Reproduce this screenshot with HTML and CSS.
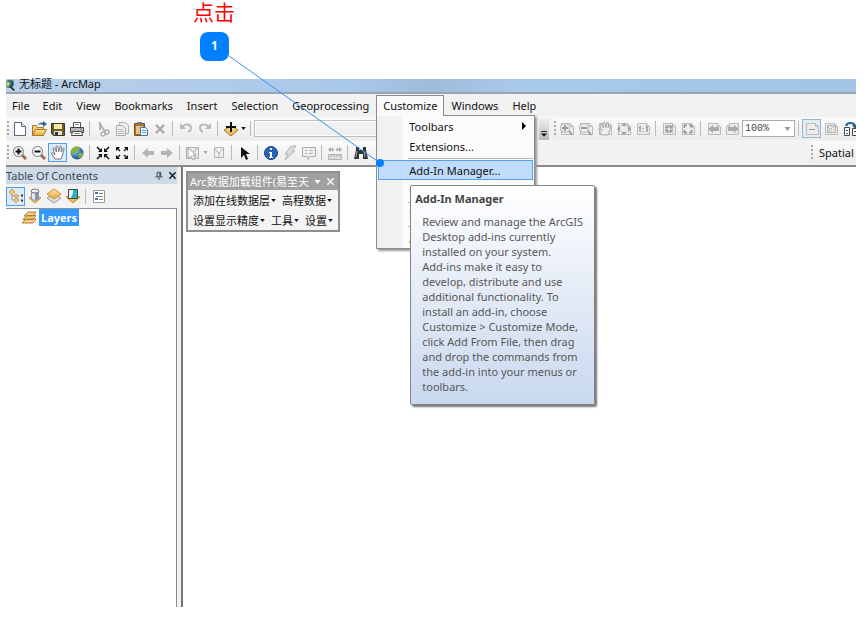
FILE: index.html
```html
<!DOCTYPE html>
<html lang="zh-CN">
<head>
<meta charset="utf-8">
<title>无标题 - ArcMap</title>
<link rel="stylesheet" href="styles.css">
</head>
<body>
<svg class="sprite" aria-hidden="true">
  <defs>
    <linearGradient id="gold" x1="0" y1="0" x2="0" y2="1"><stop offset="0" stop-color="#ffe9a8"/><stop offset="1" stop-color="#e9a63a"/></linearGradient>
    <radialGradient id="sea" cx=".35" cy=".3" r=".8"><stop offset="0" stop-color="#8cc6f5"/><stop offset="1" stop-color="#123f86"/></radialGradient>
  </defs>
  <symbol id="new" viewBox="0 0 16 16"><path d="M2.500 1.500h7l4 4v9h-11z" fill="#fff" stroke="#59687c"/><path d="M9.500 1.500v4h4" fill="#dfe8f3" stroke="#59687c"/></symbol>
  <symbol id="open" viewBox="0 0 16 16"><path d="M1.500 14.500v-10h4l1 2h6v8z" fill="#f5cf6e" stroke="#a8792b"/><path d="M1.500 14.500l3-6h11l-3 6z" fill="url(#gold)" stroke="#a8792b"/><path d="M7 4c1-2 3-3 5-2V0l4 3-4 3V4c-2-1-3-1-5 0z" fill="#2a639e"/></symbol>
  <symbol id="save" viewBox="0 0 16 16"><path d="M1.500 2.500h13v12h-11l-2-2z" fill="#6d5c20" stroke="#3d3620"/><path d="M4 3h8v5H4z" fill="#f4e7a7"/><path d="M4 10h8v4H4z" fill="#ddd"/><path d="M5 11h3v3H5z" fill="#333"/></symbol>
  <symbol id="print" viewBox="0 0 16 16"><path d="M4.500 6V1.500h7V6" fill="#fff" stroke="#555"/><path d="M1.500 6.500h13v5h-13z" fill="#b5b8b9" stroke="#3f4345"/><path d="M3.500 10.500h9l1 4h-11z" fill="#fff" stroke="#444"/><path d="M5 12.500h6M6 3.500h4" stroke="#888"/><path d="M11 8h2" stroke="#3d9b35"/></symbol>
  <symbol id="cut" viewBox="0 0 16 16"><path d="M4 1l6 10M5 1l0 8" fill="none" stroke="#b4b4b4" stroke-width="2"/><circle cx="12" cy="11" r="2" fill="none" stroke="#b0b0b0" stroke-width="1.500"/><circle cx="8" cy="13" r="2" fill="none" stroke="#b4b4b4" stroke-width="1.500"/></symbol>
  <symbol id="copy" viewBox="0 0 16 16"><path d="M5.500 1.500h6l3 3v8h-9z" fill="#eee" stroke="#b0b0b0"/><path d="M2.500 4.500h6l3 3v7h-9z" fill="#eee" stroke="#aaa"/><path d="M4 8.500h5M4 10.500h6M4 12.500h6" stroke="#bbb"/></symbol>
  <symbol id="paste" viewBox="0 0 16 16"><path d="M1.500 2.500h10v12h-10z" fill="#a97428" stroke="#71501f"/><path d="M4 1h5v3H4z" fill="#777"/><path d="M3 5h7v8H3z" fill="#e8c37a"/><path d="M7.500 6.500h5l2 2v6h-7z" fill="#eaf2fc" stroke="#4b73a5"/><path d="M9 9.500h4M9 11.500h4" stroke="#73a0d4"/></symbol>
  <symbol id="del" viewBox="0 0 16 16"><path d="M4 4l8 8M12 4l-8 8" stroke="#a4a4a4" stroke-width="2"/></symbol>
  <symbol id="undo" viewBox="0 0 16 16"><path d="M4 6c4-4 9-3 9 1 0 2-1 3-3 4" fill="none" stroke="#bababa" stroke-width="2"/><path d="M2 2v6h6z" fill="#bababa"/></symbol>
  <symbol id="adddata" viewBox="0 0 16 16"><path d="M1 9l7-4 7 4-7 6z" fill="url(#gold)" stroke="#a8792b"/><path d="M8 1v10M3 6h10" stroke="#111" stroke-width="2"/></symbol>
  <symbol id="zin" viewBox="0 0 16 16"><path d="M10 10l4 4" stroke="#a36a50" stroke-width="3"/><circle cx="6.500" cy="6.500" r="5" fill="#f7fafc" stroke="#777"/><path d="M3.500 6.500h6M6.500 3.500v6" stroke="#111" stroke-width="2"/></symbol>
  <symbol id="zout" viewBox="0 0 16 16"><path d="M10 10l4 4" stroke="#a36a50" stroke-width="3"/><circle cx="6.500" cy="6.500" r="5" fill="#f7fafc" stroke="#777"/><path d="M3.500 6.500h6" stroke="#111" stroke-width="2"/></symbol>
  <symbol id="hand" viewBox="0 0 16 16"><path d="M5 14L1.500 8.500c0-1 1-1 2 0L5 10 3 4c0-1.500 1-1.500 2 0l1.500 3L6 2c0-1.500 1.500-1.500 2 0l.5 5L10 2c0-1.500 1.500-1 1.500 0l-.5 5 2-3.500c1-1 1.500 0 1 1L12.500 10 11 14z" fill="#fff" stroke="#777"/></symbol>
  <symbol id="globe" viewBox="0 0 16 16"><circle cx="8" cy="8" r="6.500" fill="url(#sea)"/><path d="M5 2c3-1 5 0 6 1l-2 3-3 1-1 3-3-2c0-3 1-5 3-6zM10 8l4 0c0 3-2 5-4 5l-1-3z" fill="#80b43c"/></symbol>
  <symbol id="shrink" viewBox="0 0 16 16"><path d="M2 2l4 4M14 2l-4 4M2 14l4-4M14 14l-4-4" stroke="#111" stroke-width="1.500"/><path d="M7 3v4H3zM9 3v4h4zM7 13V9H3zM9 13V9h4z" fill="#111"/></symbol>
  <symbol id="expand" viewBox="0 0 16 16"><path d="M3 3l3 3M13 3l-3 3M3 13l3-3M13 13l-3-3" stroke="#222" stroke-width="1.500"/><path d="M2 2h4L2 6zM14 2h-4l4 4zM2 14h4l-4-4zM14 14h-4l4-4z" fill="#111"/></symbol>
  <symbol id="back" viewBox="0 0 16 16"><path d="M2 8l6-5v3h6v4H8v3z" fill="#b4b4b4"/></symbol>
  <symbol id="selfeat" viewBox="0 0 16 16"><path d="M1.500 2.500h12v11h-12zM8 7l5-4M10 8v5" fill="#e8e8e8" stroke="#b0b0b0"/><path d="M3 3l8 7H8l2 4-2 1-2-4-3 2z" fill="#fff" stroke="#a6a6a6"/></symbol>
  <symbol id="clear" viewBox="0 0 16 16"><path d="M3.500 2.500h9v10h-9zM4 4l4 4 4-4M8 8v4" fill="#eee" stroke="#b4b4b4"/></symbol>
  <symbol id="arrow" viewBox="0 0 16 16"><path d="M4 2v11l3-3 2 5 2-1-2-5h4z" fill="#111"/></symbol>
  <symbol id="info" viewBox="0 0 16 16"><circle cx="8" cy="8" r="6.500" fill="#2765b4" stroke="#164681"/><path d="M6 7h3v5h1v1H6v-1h1V8H6zM7 3h2v2H7z" fill="#fff"/></symbol>
  <symbol id="bolt" viewBox="0 0 16 16"><path d="M9 1h5l-4 5h3L3 15l3-6H3z" fill="#ddd" stroke="#b4b4b4"/></symbol>
  <symbol id="note" viewBox="0 0 16 16"><path d="M1.500 2.500h13v9H9l-2 3v-3H1.500z" fill="#f0f0f0" stroke="#aaa"/><path d="M4 5.500h2M8 5.500h4M4 8.500h2M8 8.500h4" stroke="#aaa"/></symbol>
  <symbol id="measure" viewBox="0 0 16 16"><path d="M1.500 9.500h13v5h-13z" fill="#ddd" stroke="#b4b4b4"/><path d="M4 10v2M7 10v2M10 10v2M13 10v2M2 4.500h5M9 4.500h5" stroke="#aaa"/><path d="M1 4.500L4 2v5zM15 4.500L12 2v5zM7 4.500L5 2v5zM9 4.500L11 2v5z" fill="#aaa"/></symbol>
  <symbol id="find" viewBox="0 0 16 16"><path d="M3 2h3v3h4V2h3v3l2 9h-5V9H6v5H1l2-9z" fill="#333"/><path d="M4 6l-1 6M11 6l1 6" stroke="#aaa"/></symbol>
  <symbol id="page" viewBox="0 0 16 16"><path d="M2.500 2.500h9l3 3v8h-12z" fill="#ececec" stroke="#bababa"/><path d="M11.500 2.500v3h3" fill="#ddd" stroke="#bababa"/></symbol>
  <symbol id="pzin" viewBox="0 0 16 16"><use href="#page"/><circle cx="6" cy="7" r="4.500" fill="#eee" stroke="#b0b0b0"/><path d="M3 7h6M6 4v6M10 10l3 4" stroke="#999" stroke-width="2"/></symbol>
  <symbol id="pzout" viewBox="0 0 16 16"><use href="#page"/><circle cx="6" cy="7" r="4.500" fill="#eee" stroke="#b0b0b0"/><path d="M3 7h6M10 10l3 4" stroke="#999" stroke-width="2"/></symbol>
  <symbol id="phand" viewBox="0 0 16 16"><use href="#page"/><path d="M5 14L1.500 8.500c0-1 1-1 2 0L5 10 3 4c0-1.500 1-1.500 2 0l1.500 3L6 2c0-1.500 1.500-1.500 2 0l.5 5L10 2c0-1.500 1.500-1 1.500 0l-.5 5 2-3.500c1-1 1.500 0 1 1L12.500 10 11 14z" fill="#eee" stroke="#aaa"/></symbol>
  <symbol id="pfull" viewBox="0 0 16 16"><use href="#page"/><path d="M8 2l3 3H5zM8 14l3-3H5zM1 8l3-3v6zM15 8l-3-3v6z" fill="#a0a0a0"/></symbol>
  <symbol id="pone" viewBox="0 0 16 16"><use href="#page"/><path d="M4 7l1-1v5M11 7l1-1v5M8 7v1M8 10v1" fill="none" stroke="#9c9c9c" stroke-width="1.500"/></symbol>
  <symbol id="pshrink" viewBox="0 0 16 16"><use href="#page"/><path d="M7 4v3H4zM9 4v3h3zM7 12V9H4zM9 12V9h3zM4 4l2 2M12 4l-2 2M4 12l2-2M12 12l-2-2" fill="#999" stroke="#999"/></symbol>
  <symbol id="pexpand" viewBox="0 0 16 16"><use href="#page"/><path d="M4 4h3L4 7zM12 4H9l3 3zM4 12h3L4 9zM12 12H9l3-3z" fill="#999" stroke="#999"/></symbol>
  <symbol id="pback" viewBox="0 0 16 16"><use href="#page"/><path d="M2 8l5-4v2h6v4H7v2z" fill="#aaa"/></symbol>
  <symbol id="draft" viewBox="0 0 16 16"><use href="#page"/><path d="M5 8.500h6" stroke="#999"/></symbol>
  <symbol id="dframe" viewBox="0 0 16 16"><use href="#page"/><path d="M4.500 4.500h8v7h-8z" fill="#e4e4e4" stroke="#999" stroke-dasharray="2 1"/><path d="M5 11l6-6M5 6l3 3" stroke="#b4b4b4"/></symbol>
  <symbol id="ddp" viewBox="0 0 16 16"><path d="M2.500 6.500h5v8h-5zM10.500 7.500h5v7h-5z" fill="#fff" stroke="#444"/><path d="M4 5c1-4 8-4 9 0" fill="none" stroke="#1c649c" stroke-width="2"/><path d="M10 4h6l-3 4zM4 9h2v1H4zM4 12h2v1H4zM12 10h2v1h-2z" fill="#245b8c"/></symbol>
  <symbol id="order" viewBox="0 0 16 16"><path d="M4 5v7h4M4 8h3" fill="none" stroke="#999"/><path d="M1 4l3-3 3 3-3 3zM6 8l2-2 3 2-3 2zM6 12l2-2 3 2-3 3z" fill="#f1c67c" stroke="#cf9c4b"/><path d="M13 7.500h2M13 12.500h2" stroke="#333" stroke-width="2"/></symbol>
  <symbol id="source" viewBox="0 0 16 16"><path d="M2 10l6-3 6 3-6 5z" fill="#f4bc58" stroke="#d09a3a"/><path d="M4 3v8c1 2 7 2 8 0V3z" fill="#8998ad"/><path d="M5 4v7l3 1V4z" fill="#e4eaf2"/><ellipse cx="8" cy="3" rx="4" ry="2" fill="#eef2f7" stroke="#66758b"/></symbol>
  <symbol id="visible" viewBox="0 0 16 16"><path d="M1 10l7 5 7-5-7-4z" fill="#ddd" stroke="#9d9992"/><path d="M1 6l7-5 7 5-7 5z" fill="url(#gold)" stroke="#c9913a"/></symbol>
  <symbol id="selection" viewBox="0 0 16 16"><path d="M1 9l7-2 7 2-7 6z" fill="#f1b953" stroke="#c68c31"/><path d="M3.500 1.500h9v9h-9z" fill="#24b4d0" stroke="#444"/><path d="M4 2h4v3l-2 5H4z" fill="#e8f5f8"/></symbol>
  <symbol id="options" viewBox="0 0 16 16"><path d="M2.500 2.500h11v12h-11z" fill="#fff" stroke="#999"/><path d="M4 4h3v2H4zM4 10h3v2H4z" fill="#4772a8"/><path d="M8 5.500h4M5 8.500h7M8 11.500h4" stroke="#888"/></symbol>
  <symbol id="layers" viewBox="0 0 16 16"><path d="M1 13l4-4h10l-3 4zM2 9.500l4-4h9l-3 4zM3 6l4-4h8l-3 4z" fill="#f3cf8b" stroke="#b47e32"/></symbol>
  <symbol id="pin" viewBox="0 0 10 10"><path d="M3.500 6V1.500h4V6M6.500 2v4M1.500 6.500h8M5.500 7v3" fill="none" stroke="#333"/></symbol>
  <symbol id="close" viewBox="0 0 10 10"><path d="M1.500 1.500l7 7M8.500 1.500l-7 7" stroke="currentColor" stroke-width="1.500"/></symbol>
  <symbol id="down" viewBox="0 0 6 4"><path d="M0 0h6L3 4z" fill="currentColor"/></symbol>
</svg>

<div class="page">
  <header class="note">
    <h1 class="note-text">点击</h1>
    <span class="badge">1</span>
  </header>

  <main class="app">
    <div class="titlebar"><svg class="applogo" viewBox="0 0 12 14"><circle cx="4" cy="5" r="5" fill="#3f7e71"/><path d="M1 2l4 2-2 4-3-1z" fill="#b9d28b"/><path d="M5 8l5 5" stroke="#222" stroke-width="2"/><path d="M6 1h3v7H6z" fill="#28566f"/></svg><span>无标题 - ArcMap</span></div>

    <nav class="menubar">
      <button class="mitem">File</button>
      <button class="mitem">Edit</button>
      <button class="mitem">View</button>
      <button class="mitem">Bookmarks</button>
      <button class="mitem">Insert</button>
      <button class="mitem">Selection</button>
      <button class="mitem">Geoprocessing</button>
      <div class="mgroup">
        <button class="mitem open">Customize</button>
        <div class="dropdown">
          <button class="ditem">Toolbars<svg class="sub" viewBox="0 0 4 8"><path d="M0 0l4 4-4 4z"/></svg></button>
          <button class="ditem">Extensions...</button>
          <hr class="dsep">
          <button class="ditem active">Add-In Manager...</button>
          <button class="ditem">C</button>
          <hr class="dsep">
          <button class="ditem">S</button>
          <hr class="dsep">
          <button class="ditem">A</button>
          <div class="tooltip" role="tooltip">
            <strong class="tip-title">Add-In Manager</strong>
            <p class="tip-body">Review and manage the ArcGIS<br>Desktop add-ins currently<br>installed on your system.<br>Add-ins make it easy to<br>develop, distribute and use<br>additional functionality. To<br>install an add-in, choose<br>Customize &gt; Customize Mode,<br>click Add From File, then drag<br>and drop the commands from<br>the add-in into your menus or<br>toolbars.</p>
          </div>
        </div>
      </div>
      <button class="mitem">Windows</button>
      <button class="mitem">Help</button>
    </nav>

    <div class="toolrow">
      <div class="strip standard">
        <i class="grip"></i>
        <button class="tool" aria-label="New"><svg><use href="#new"/></svg></button>
        <button class="tool" aria-label="Open"><svg><use href="#open"/></svg></button>
        <button class="tool" aria-label="Save"><svg><use href="#save"/></svg></button>
        <button class="tool" aria-label="Print"><svg><use href="#print"/></svg></button>
        <i class="sep"></i>
        <button class="tool" aria-label="Cut"><svg><use href="#cut"/></svg></button>
        <button class="tool" aria-label="Copy"><svg><use href="#copy"/></svg></button>
        <button class="tool" aria-label="Paste"><svg><use href="#paste"/></svg></button>
        <button class="tool" aria-label="Delete"><svg><use href="#del"/></svg></button>
        <i class="sep"></i>
        <button class="tool" aria-label="Undo"><svg><use href="#undo"/></svg></button>
        <button class="tool flip" aria-label="Redo"><svg><use href="#undo"/></svg></button>
        <i class="sep"></i>
        <button class="tool" aria-label="Add Data"><svg><use href="#adddata"/></svg></button>
        <button class="drop" aria-label="Add Data options"><svg><use href="#down"/></svg></button>
        <i class="sep"></i>
        <select class="combo scale" aria-label="Map scale" disabled></select>
        <button class="overflow" aria-label="Toolbar options"><svg viewBox="0 0 8 8"><path d="M0 1h8v1H0zM0 4h8L4 8z"/></svg></button>
      </div>
      <div class="strip layout">
        <i class="grip"></i>
        <button class="tool" aria-label="Zoom In Page"><svg><use href="#pzin"/></svg></button>
        <button class="tool" aria-label="Zoom Out Page"><svg><use href="#pzout"/></svg></button>
        <button class="tool" aria-label="Pan Page"><svg><use href="#phand"/></svg></button>
        <button class="tool" aria-label="Whole Page"><svg><use href="#pfull"/></svg></button>
        <button class="tool" aria-label="Actual Size"><svg><use href="#pone"/></svg></button>
        <i class="sep"></i>
        <button class="tool" aria-label="Fixed Zoom In Page"><svg><use href="#pshrink"/></svg></button>
        <button class="tool" aria-label="Fixed Zoom Out Page"><svg><use href="#pexpand"/></svg></button>
        <i class="sep"></i>
        <button class="tool" aria-label="Previous Extent"><svg><use href="#pback"/></svg></button>
        <button class="tool flip" aria-label="Next Extent"><svg><use href="#pback"/></svg></button>
        <div class="combo-wrap"><select class="combo percent" aria-label="Page zoom"><option>100%</option></select><svg class="caret"><use href="#down"/></svg></div>
        <i class="sep"></i>
        <button class="tool soft" aria-label="Draft Mode"><svg><use href="#draft"/></svg></button>
        <button class="tool" aria-label="Focus Data Frame"><svg><use href="#dframe"/></svg></button>
        <button class="tool" aria-label="Data Driven Pages"><svg><use href="#ddp"/></svg></button>
      </div>
    </div>

    <div class="toolrow">
      <div class="strip tools">
        <i class="grip"></i>
        <button class="tool" aria-label="Zoom In"><svg><use href="#zin"/></svg></button>
        <button class="tool" aria-label="Zoom Out"><svg><use href="#zout"/></svg></button>
        <button class="tool on" aria-label="Pan"><svg><use href="#hand"/></svg></button>
        <button class="tool" aria-label="Full Extent"><svg><use href="#globe"/></svg></button>
        <i class="sep"></i>
        <button class="tool" aria-label="Fixed Zoom In"><svg><use href="#shrink"/></svg></button>
        <button class="tool" aria-label="Fixed Zoom Out"><svg><use href="#expand"/></svg></button>
        <i class="sep"></i>
        <button class="tool" aria-label="Back"><svg><use href="#back"/></svg></button>
        <button class="tool flip" aria-label="Forward"><svg><use href="#back"/></svg></button>
        <i class="sep"></i>
        <button class="tool" aria-label="Select Features"><svg><use href="#selfeat"/></svg></button>
        <button class="drop dim" aria-label="Select options"><svg><use href="#down"/></svg></button>
        <button class="tool" aria-label="Clear Selection"><svg><use href="#clear"/></svg></button>
        <i class="sep"></i>
        <button class="tool" aria-label="Select Elements"><svg><use href="#arrow"/></svg></button>
        <i class="sep"></i>
        <button class="tool" aria-label="Identify"><svg><use href="#info"/></svg></button>
        <button class="tool" aria-label="Hyperlink"><svg><use href="#bolt"/></svg></button>
        <button class="tool" aria-label="HTML Popup"><svg><use href="#note"/></svg></button>
        <i class="sep"></i>
        <button class="tool" aria-label="Measure"><svg><use href="#measure"/></svg></button>
        <i class="sep"></i>
        <button class="tool" aria-label="Find"><svg><use href="#find"/></svg></button>
      </div>
      <div class="strip spatial"><i class="grip"></i><button class="label">Spatial</button></div>
    </div>

    <div class="workspace">
      <aside class="toc">
        <div class="toc-head"><h2>Table Of Contents</h2><button class="mini" aria-label="Pin"><svg><use href="#pin"/></svg></button><button class="mini" aria-label="Close"><svg><use href="#close"/></svg></button></div>
        <div class="toc-tools">
          <button class="tool on" aria-label="List By Drawing Order"><svg><use href="#order"/></svg></button>
          <button class="tool" aria-label="List By Source"><svg><use href="#source"/></svg></button>
          <button class="tool" aria-label="List By Visibility"><svg><use href="#visible"/></svg></button>
          <button class="tool" aria-label="List By Selection"><svg><use href="#selection"/></svg></button>
          <i class="sep"></i>
          <button class="tool" aria-label="Options"><svg><use href="#options"/></svg></button>
        </div>
        <div class="tree"><svg class="lyr"><use href="#layers"/></svg><span class="node">Layers</span></div>
      </aside>
      <section class="map">
        <div class="float">
          <div class="float-head"><span>Arc数据加载组件(易至天</span><svg class="fdown"><use href="#down"/></svg><button class="mini" aria-label="Close"><svg><use href="#close"/></svg></button></div>
          <div class="float-row"><button class="fbtn">添加在线数据层<svg><use href="#down"/></svg></button><button class="fbtn">高程数据<svg><use href="#down"/></svg></button></div>
          <div class="float-row"><button class="fbtn">设置显示精度<svg><use href="#down"/></svg></button><button class="fbtn">工具<svg><use href="#down"/></svg></button><button class="fbtn">设置<svg><use href="#down"/></svg></button></div>
        </div>
      </section>
    </div>
  </main>

  <svg class="leader" viewBox="0 0 160 116" aria-hidden="true"><path d="M3 3L154 110" stroke="#3d8cfa" fill="none"/><circle cx="154" cy="110" r="4" fill="#0080ff"/></svg>
</div>
</body>
</html>
```

FILE: styles.css
```css
* { box-sizing: border-box; }

body {
  margin: 0;
  background: #fff;
  color: #111;
  font: 11px/15px "Noto Sans", "Noto Sans CJK SC", sans-serif;
}

button, select {
  margin: 0;
  padding: 0;
  border: 0;
  background: none;
  color: inherit;
  font: inherit;
  white-space: nowrap;
}

h1, h2, p { margin: 0; font-weight: 400; }

.sprite { position: absolute; width: 0; height: 0; }

.page {
  position: relative;
  display: flex;
  flex-direction: column;
  min-height: 100vh;
  padding: 0 10px 10px 6px;
}

/* Callout above the window */
.note {
  display: flex;
  flex-direction: column;
  align-items: flex-start;
  height: 79px;
  padding-left: 187px;
}
.note-text { color: #f00; font: 21px/22px "Noto Sans CJK SC", sans-serif; }
.badge {
  width: 29px;
  height: 29px;
  margin: 10px 0 0 7px;
  border-radius: 8px;
  background: #0080ff;
  color: #fff;
  font-size: 12px;
  font-weight: 700;
  line-height: 28px;
  text-align: center;
}
.leader { position: absolute; left: 226px; top: 53px; width: 160px; height: 116px; z-index: 5; pointer-events: none; }

/* Application window */
.app { display: flex; flex: 1; flex-direction: column; background: #f2f2f2; }
.titlebar {
  display: flex;
  height: 15px;
  gap: 3px;
  border-bottom: 2px solid #9aa5b3;
  background: linear-gradient(90deg, #b8d0e8, #a9c9ea 40%, #9fbbdb 50%, #a9c9ea 60%, #a4c4e6);
  line-height: 10px;
}
.applogo { width: 10px; height: 13px; }

.menubar { display: flex; height: 23px; padding-top: 1px; }
.mgroup { position: relative; }
.mitem { height: 20px; padding: 0 7px; }
.mitem:first-child { padding: 0 6px; }
.mitem.open { position: relative; z-index: 3; height: 21px; padding: 0 6px 1px; border: 1px solid #8c8c8c; border-bottom: 0; background: #fafafa; }

.dropdown {
  position: absolute;
  left: 0;
  top: 20px;
  z-index: 2;
  width: 159px;
  padding: 0 1px;
  border: 1px solid #8c8c8c;
  background: linear-gradient(90deg, #f1f1f1 24px, #fbfbfb 26px);
  box-shadow: 2px 2px 2px #999;
}
.ditem { display: flex; align-items: center; justify-content: space-between; width: 100%; height: 20px; padding: 0 6px 0 30px; border: 1px solid transparent; }
.ditem.active { border-color: #4fa3f7; background: #bfdcfa; }
.sub { width: 4px; height: 8px; }
.dsep { height: 1px; margin: 2px 0 1px 30px; border: 0; background: #b8b8b8; }

.tooltip {
  position: absolute;
  left: 33px;
  top: 69px;
  width: 185px;
  padding: 5px 4px 10px;
  border: 1px solid #858585;
  border-radius: 2px;
  background: linear-gradient(#fff, #e4ebf6 50%, #c9d8ef);
  box-shadow: 2px 2px 2px #777;
  color: #575757;
  white-space: nowrap;
}
.tip-title { display: block; color: #444; }
.tip-body { padding: 8px 0 0 7px; }

/* Toolbars */
.toolrow { display: flex; justify-content: space-between; height: 24px; }
.strip { display: flex; align-items: center; height: 23px; background: linear-gradient(#fbfbfb, #ececec); }
.standard { flex: 0 0 543px; }
.layout { flex: 0 1 303px; overflow: hidden; }
.tools { flex: 0 0 380px; }
.spatial { flex: 0 0 46px; }
.label { padding-left: 5px; }
.grip { flex: none; width: 4px; height: 15px; background: repeating-linear-gradient(#aaa 0 2px, transparent 2px 4px) 1px 0 / 2px 100% no-repeat; }
.sep { flex: none; width: 7px; height: 15px; background: linear-gradient(#bbb, #bbb) 3px 0 / 1px 100% no-repeat; }
.tool { display: flex; flex: none; align-items: center; justify-content: center; width: 19px; height: 19px; }
.tool svg { width: 16px; height: 16px; }
.tool.on { border: 1px solid #4f9ff0; background: #dcebfb; }
.tool.soft { border: 1px solid #9db4cf; background: #e3ebf5; }
.flip svg { transform: scaleX(-1); }
.drop { display: flex; flex: none; align-items: center; justify-content: center; width: 7px; height: 19px; }
.drop svg { width: 5px; height: 3px; }
.dim { color: #aaa; }
.combo { appearance: none; height: 17px; border: 1px solid #aaa; background: #fff; }
.scale { flex: 0 0 132px; box-shadow: inset 0 0 0 1px #fff; background: #efefef; }
.combo-wrap { position: relative; display: flex; flex: none; }
.percent { width: 53px; padding-left: 2px; color: #444; font: 10px/14px "Liberation Mono", monospace; }
.caret { position: absolute; right: 4px; top: 7px; width: 7px; height: 4px; color: #999; }
.overflow { display: flex; align-items: flex-end; justify-content: center; width: 10px; height: 22px; margin-left: auto; padding-bottom: 3px; background: linear-gradient(#f0f0f0, #b8b8b8); }
.overflow svg { width: 6px; height: 7px; }

/* Contents pane and map */
.workspace { display: flex; flex: 1; gap: 4px; border-top: 2px solid #8a8a8a; }
.toc { display: flex; flex: 0 0 171px; flex-direction: column; }
.toc-head { display: flex; align-items: center; gap: 4px; height: 17px; background: #cddbe8; }
.toc-head h2 { flex: 1; color: #3c4650; font-size: 11px; line-height: 15px; }
.mini { display: flex; align-items: center; justify-content: center; width: 10px; height: 12px; }
.mini svg { width: 9px; height: 9px; }
.toc-tools { display: flex; align-items: center; height: 24px; }
.tree { display: flex; flex: 1; align-items: flex-start; gap: 2px; padding-left: 15px; border-top: 1px solid #8b90a0; border-right: 1px solid #8b8b98; background: #fff; }
.lyr { width: 16px; height: 18px; }
.node { height: 17px; padding: 0 2px; background: #3399ff; color: #fff; font-weight: 700; line-height: 17px; }
.map { flex: 1; padding: 4px 3px; border-left: 2px solid #777; background: #fff; }

.float { display: inline-block; width: 154px; border: 2px solid #8e8e8e; background: #f4f4f4; }
.float-head { display: flex; align-items: center; gap: 4px; height: 17px; padding: 0 3px 0 2px; background: #a0a0a0; color: #fff; white-space: nowrap; }
.float-head span { flex: 1; }
.fdown { width: 7px; height: 4px; }
.float-row { display: flex; gap: 6px; height: 20px; padding-left: 5px; }
.fbtn { display: flex; align-items: center; gap: 1px; }
.fbtn svg { width: 5px; height: 3px; }
```
